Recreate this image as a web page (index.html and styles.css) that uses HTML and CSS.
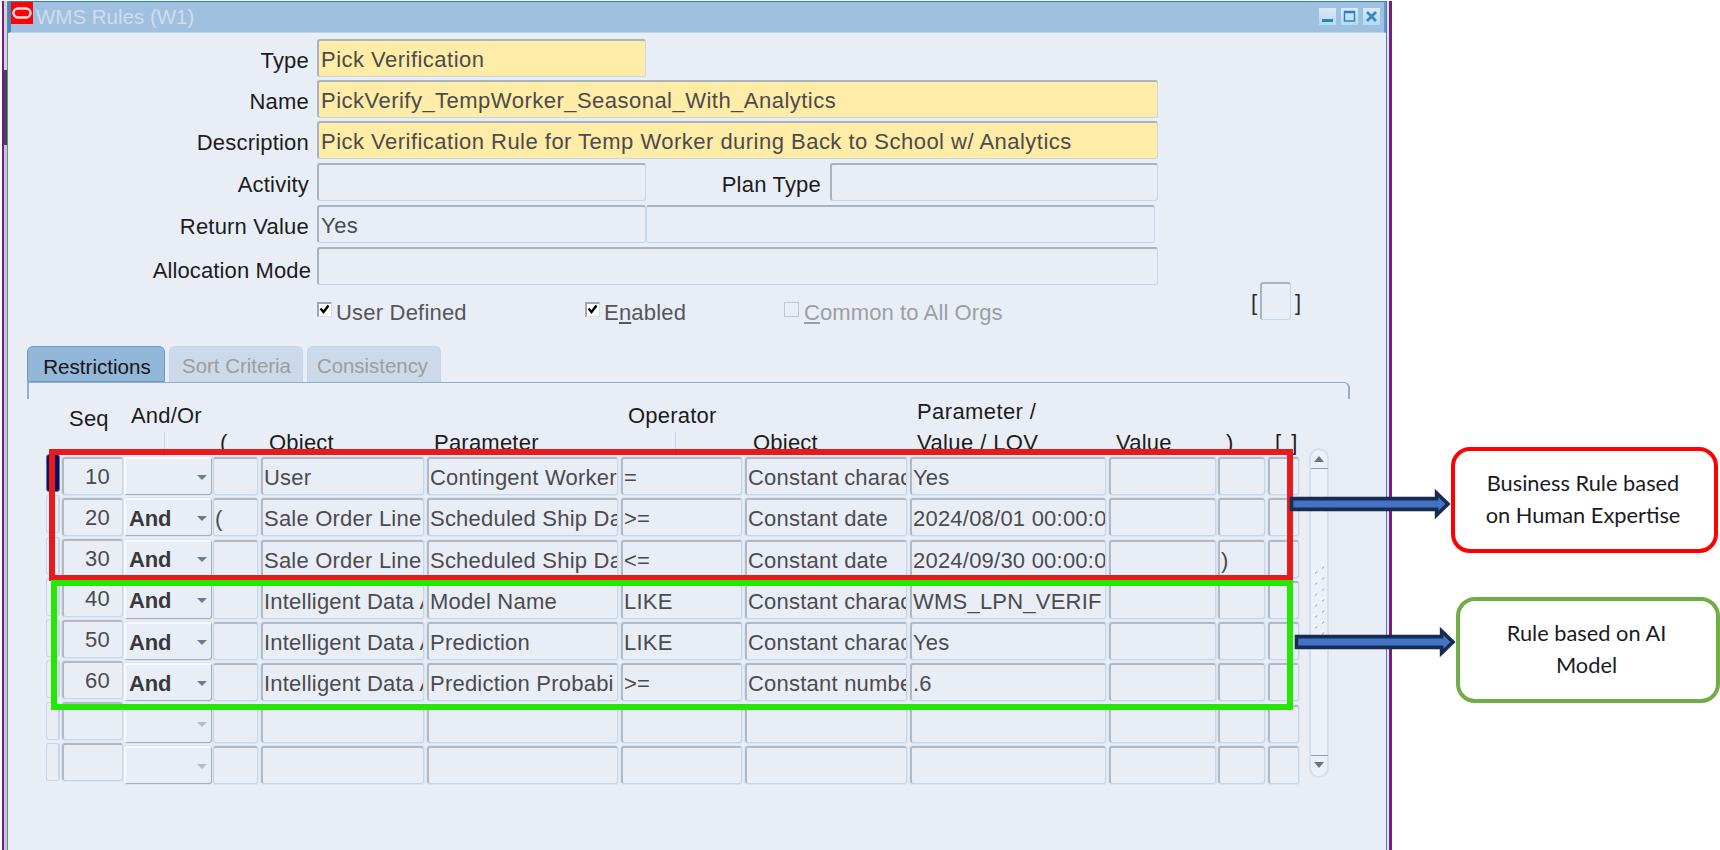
FILE: index.html
```html
<!DOCTYPE html>
<html lang="en">
<head>
  <meta charset="UTF-8" />
  <title>WMS Rules (W1)</title>
  <link rel="stylesheet" href="styles.css">
</head>
<body>

  <div class="frame">
    <div class="window">

      <div class="titlebar">
        <svg class="logo" viewBox="0 0 22 22"><rect width="22" height="22" fill="#fb0307"/><rect x="2.500" y="6.500" width="17" height="9" rx="4.500" fill="none" stroke="#ffe3e3" stroke-width="2.400"/></svg>
        <span class="title">WMS Rules (W1)</span>
        <div class="win-buttons">
          <svg viewBox="0 0 17 17"><path d="M3 12.500h11" stroke="#2f80c2" stroke-width="3"/></svg>
          <svg viewBox="0 0 17 17"><rect x="3.500" y="4" width="10" height="9" fill="none" stroke="#2f80c2" stroke-width="1.500"/><path d="M3 4h11" stroke="#2f80c2" stroke-width="2.500"/></svg>
          <svg viewBox="0 0 17 17"><path d="M4 4l9 9M13 4l-9 9" stroke="#3c86c5" stroke-width="2.800"/></svg>
        </div>
      </div>

      <!-- Rule header form -->
      <div class="form">
        <div class="form-row"><label>Type</label><div class="field req short">Pick Verification</div></div>
        <div class="form-row"><label>Name</label><div class="field req">PickVerify_TempWorker_Seasonal_With_Analytics</div></div>
        <div class="form-row gap-lg"><label>Description</label><div class="field req">Pick Verification Rule for Temp Worker during Back to School w/ Analytics</div></div>
        <div class="form-row gap-lg"><label>Activity</label><div class="field short"></div><label class="plan">Plan Type</label><div class="field short"></div></div>
        <div class="form-row gap-lg"><label>Return Value</label><div class="field short">Yes</div><div class="field second"></div></div>
        <div class="form-row"><label class="alloc">Allocation Mode</label><div class="field"></div></div>
      </div>

      <div class="options">
        <div class="check user"><span class="box"><svg viewBox="0 0 11 11"><path d="M1.500 4.500l3 3.500 5-6.500" fill="none" stroke="#000" stroke-width="2.400"/></svg></span>User Defined</div>
        <div class="check enabled"><span class="box"><svg viewBox="0 0 11 11"><path d="M1.500 4.500l3 3.500 5-6.500" fill="none" stroke="#000" stroke-width="2.400"/></svg></span><span>E<u>n</u>abled</span></div>
        <div class="check common disabled"><span class="box"></span><span><u>C</u>ommon to All Orgs</span></div>
        <div class="flex-flag"><span>[</span><div class="field"></div><span>]</span></div>
      </div>

      <div class="tabs">
        <div class="tab active">Restrictions</div>
        <div class="tab">Sort Criteria</div>
        <div class="tab last">Consistency</div>
      </div>
      <div class="panel-edge"></div>

      <!-- Restrictions table, one block per column -->
      <div class="table">
        <div class="col mark"><div class="head"></div><i class="on"></i><i></i><i></i><i></i><i></i><i></i><i></i><i></i></div>
        <div class="col seq"><div class="head">Seq</div><div>10</div><div>20</div><div>30</div><div>40</div><div>50</div><div>60</div><div></div><div></div></div>
        <div class="col andor">
          <div class="head tick">And/Or</div>
          <div></div><div>And</div><div>And</div><div>And</div><div>And</div><div>And</div><div class="off"></div><div class="off"></div>
        </div>
        <div class="col open"><div class="head">(</div><div></div><div>(</div><div></div><div></div><div></div><div></div><div></div><div></div></div>
        <div class="col object"><div class="head">Object</div><div>User</div><div>Sale Order Line</div><div>Sale Order Line</div><div>Intelligent Data A</div><div>Intelligent Data A</div><div>Intelligent Data A</div><div></div><div></div></div>
        <div class="col param"><div class="head">Parameter</div><div>Contingent Worker</div><div>Scheduled Ship Da</div><div>Scheduled Ship Da</div><div>Model Name</div><div>Prediction</div><div>Prediction Probabi</div><div></div><div></div></div>
        <div class="col oper"><div class="head tick">Operator</div><div>=</div><div>&gt;=</div><div>&lt;=</div><div>LIKE</div><div>LIKE</div><div>&gt;=</div><div></div><div></div></div>
        <div class="col object2"><div class="head">Object</div><div>Constant charac</div><div>Constant date</div><div>Constant date</div><div>Constant charac</div><div>Constant charac</div><div>Constant numbe</div><div></div><div></div></div>
        <div class="col lov"><div class="head">Parameter /<br>Value / LOV</div><div>Yes</div><div>2024/08/01 00:00:0</div><div>2024/09/30 00:00:0</div><div>WMS_LPN_VERIF</div><div>Yes</div><div>.6</div><div></div><div></div></div>
        <div class="col value"><div class="head">Value</div><div></div><div></div><div></div><div></div><div></div><div></div><div></div><div></div></div>
        <div class="col close"><div class="head">)</div><div></div><div></div><div>)</div><div></div><div></div><div></div><div></div><div></div></div>
        <div class="col flag"><div class="head">[ ]</div><div></div><div></div><div></div><div></div><div></div><div></div><div></div><div></div></div>
        <div class="scrollbar">
          <span class="up"></span>
          <svg class="grip" viewBox="0 0 14 70">
            <defs><pattern id="dots" width="14" height="11" patternUnits="userSpaceOnUse">
              <path d="M2 7.500l2-2M9 2.500l2-2" stroke="#fff" stroke-width="2"/>
              <path d="M3 8.500l2-2M10 3.500l2-2" stroke="#a5bbd2" stroke-width="1.300"/>
            </pattern></defs>
            <rect width="14" height="70" fill="url(#dots)"/>
          </svg>
          <span class="down"></span>
        </div>
      </div>
    </div>
  </div>

  <!-- Annotations over the form -->
  <div class="mark-box human"></div>
  <div class="mark-box ai"></div>
  <svg class="arrow arrow-human" viewBox="0 0 162 32"><path d="M2.500 10.600H147.600V5L159 16 147.600 27V21.400H2.500z" fill="#4472c4" stroke="#172c51" stroke-width="3.600"/></svg>
  <svg class="arrow arrow-ai" viewBox="0 0 162 32"><path d="M2.500 10.600H147.600V5L159 16 147.600 27V21.400H2.500z" fill="#4472c4" stroke="#172c51" stroke-width="3.600"/></svg>

  <div class="callouts">
    <div class="callout callout-human">Business Rule based<br>on Human Expertise</div>
    <div class="callout callout-ai">Rule based on AI<br>Model</div>
  </div>

</body>
</html>
```
FILE: styles.css
```css
:root {
  --bg: #e9eef6;
  --line: #c6d6ea;
  --shade: #a9b2bf;
  --text: #4b4b4f;
  --purple: #781e82;
}

* {
  box-sizing: border-box;
  margin: 0;
  padding: 0;
}

body {
  display: flex;
  position: relative;
  width: 1720px;
  height: 850px;
  overflow: hidden;
  background: #fff;
  font-family: "Liberation Sans", Arial, sans-serif;
  font-size: 22px;
  line-height: 25px;
  color: #1c1c20;
}

.frame {
  width: 1390px;
  height: 849px;
  margin: 1px 0 0 2px;
  padding: 0 2px 0 3px;
  border-left: 2px solid var(--purple);
  border-right: 3px solid var(--purple);
  background: #dfe5ee linear-gradient(#d0d3d8 69px, #45464a 69px, #45464a 144px, #c3c7ce 144px) 0 0 / 3px 100% no-repeat;
}

.window {
  height: 849px;
  border-left: 1px solid #6d86a6;
  border-right: 1px solid #4f7ba8;
  background: var(--bg);
}

/* Title bar */
.titlebar {
  display: flex;
  height: 32px;
  border-top: 1px solid #2b80bf;
  border-left: 3px solid #3c8ac6;
  border-right: 2px solid #5d9bd0;
  border-bottom: 1px solid #bdd4e9;
  background: #9fc1df;
}

.logo {
  width: 22px;
  height: 22px;
}

.title {
  margin: 1px 0 0 3px;
  font-size: 20.5px;
  line-height: 27px;
  color: #cfdded;
}

.win-buttons {
  display: flex;
  gap: 5px;
  margin: 6px 4px 0 auto;
}

.win-buttons svg {
  width: 17px;
  height: 17px;
  background: linear-gradient(#d8eaf7, #b5daf0);
}

/* Form */
.form {
  display: flex;
  flex-direction: column;
  gap: 3px;
  padding-top: 6px;
}

.form-row {
  display: flex;
  height: 38px;
}

.gap-lg {
  margin-bottom: 1px;
}

.form-row label {
  width: 309px;
  padding: 9px 8px 0 0;
  letter-spacing: 0.2px;
  text-align: right;
  white-space: nowrap;
}

.form-row label.plan {
  width: 184px;
  padding-right: 9px;
}

.form-row label.alloc {
  padding: 11px 6px 0 0;
  letter-spacing: 0.12px;
}

.field {
  width: 841px;
  height: 38px;
  padding: 0 2px;
  border: 1px solid var(--line);
  border-top: 2px solid var(--shade);
  border-left: 2px solid var(--shade);
  border-radius: 3px;
  line-height: 37px;
  letter-spacing: 0.48px;
  white-space: nowrap;
  overflow: hidden;
  color: var(--text);
}

.short {
  width: 329px;
}

.plan + .short {
  width: 328px;
}

.second {
  width: 509px;
  border-left: 1px solid var(--line);
}

.req {
  background: #ffeca6;
}

/* Checkboxes */
.options {
  display: flex;
  height: 61px;
  color: #55565b;
}

.check {
  display: flex;
  padding-top: 14px;
  line-height: 28px;
  letter-spacing: 0.2px;
}

.user {
  width: 268px;
  margin-left: 309px;
}

.user .box,
.enabled .box {
  margin-right: 4px;
}

.enabled {
  width: 199px;
}

.common {
  width: 467px;
  letter-spacing: 0.1px;
}

.box {
  width: 15px;
  height: 15px;
  margin: 3px 5px 0 0;
  border: 1px solid #d9dde3;
  border-top: 2px solid #a2a6ad;
  border-left: 2px solid #a2a6ad;
  background: #fff;
}

.box svg {
  display: block;
  width: 11px;
  height: 11px;
}

.disabled {
  color: #9c9ea3;
}

.disabled .box {
  border: 1px solid #c3c5c8;
  background: transparent;
}

.flex-flag {
  display: flex;
  color: #2c2c30;
}

.flex-flag span {
  width: 9px;
  line-height: 36px;
}

.flex-flag .field {
  width: 31px;
  margin: -3px 4px 0 0;
}

/* Tabs */
.tabs {
  display: flex;
  gap: 4px;
  height: 36px;
  padding-left: 19px;
}

.tab {
  width: 134px;
  padding-left: 1px;
  border: 1px solid #c3d5e8;
  border-bottom: none;
  border-radius: 6px 6px 0 0;
  background: #cbd9ea;
  font-size: 20.4px;
  line-height: 39px;
  text-align: center;
  color: #9b9da2;
}

.tab.active {
  width: 138px;
  padding-left: 2px;
  border: 1px solid #6d9ac4;
  background: #93b7d8;
  font-size: 20.6px;
  color: #15151a;
}

.tab.last {
  padding-right: 4px;
}

.panel-edge {
  width: 1323px;
  height: 17px;
  margin-left: 19px;
  border: 2px solid #93aec8;
  border-bottom: none;
  border-radius: 0 6px 0 0;
  border-top-width: 1px;
}

/* Table */
.table {
  display: flex;
  margin-top: -16px;
  padding-left: 38px;
}

.col {
  display: flex;
  flex-direction: column;
  gap: 3.3px;
  letter-spacing: 0.22px;
}

.col > div {
  height: 38px;
  padding-left: 1px;
  border: 1px solid var(--line);
  border-top: 2px solid #b2b9c4;
  border-left: 2px solid #b2b9c4;
  border-radius: 3px;
  box-shadow: 0 0 0 1px #dae5f2;
  line-height: 37px;
  white-space: nowrap;
  overflow: hidden;
  color: var(--text);
}

.col > .head {
  height: 74px;
  margin-bottom: -3.3px;
  padding: 47px 0 0;
  border: none;
  box-shadow: none;
  line-height: 25px;
  overflow: visible;
  color: #1c1c20;
}

.mark {
  width: 14px;
  margin-right: 2px;
}

.mark > .head {
  height: 71px;
}

.mark i {
  height: 38px;
  border: 1px solid var(--line);
  border-right-width: 2px;
  border-radius: 3px;
}

.mark .on {
  border: 1px solid #4a7fb5;
  background: #120a5a;
}

.seq {
  width: 61px;
  margin-right: 1px;
  gap: 2.8px;
}

.seq > div {
  padding-right: 12px;
  line-height: 36px;
  text-align: right;
}

.seq > .head {
  margin-bottom: -2.8px;
  padding: 23px 0 0 7px;
  text-align: left;
}

.andor {
  width: 88px;
  margin-right: 1px;
}

.andor > div {
  display: flex;
  align-items: center;
  padding: 1px 4px 0 3px;
  border: 2px solid #f8fafd;
  border-right: 1px solid #a9adb4;
  border-bottom: 1px solid #a9adb4;
  font-weight: bold;
  color: #39393d;
  letter-spacing: -0.2px;
}

.andor > div:not(.head)::after {
  content: "";
  margin-left: auto;
  border: 5px solid transparent;
  border-top: 5px solid #6c7a92;
  border-bottom: none;
}

.andor > div.off:not(.head)::after {
  border-top-color: #b9bbbe;
}

.andor > .head {
  display: block;
  font-weight: normal;
  letter-spacing: 0.2px;
}

.tick {
  background: linear-gradient(#c6d6ea, #c6d6ea) 40px 49px / 1px 25px no-repeat;
}

.andor > .tick {
  padding: 20px 0 0 7px;
}

.oper > .tick {
  padding: 20px 0 0 7px;
  background-position: 54px 49px;
}

.open {
  width: 45px;
  margin-right: 3px;
}

.open > div {
  border-left: 1px solid var(--line);
}

.open > .head {
  padding-left: 7px;
}

.object {
  width: 163px;
  margin-right: 3px;
}

.object > .head {
  padding-left: 8px;
}

.param {
  width: 191px;
  margin-right: 3px;
}

.param > .head {
  padding-left: 7px;
}

.oper {
  width: 121px;
  margin-right: 3px;
}

.object2 {
  width: 162px;
  margin-right: 3px;
}

.object2 > .head {
  padding-left: 8px;
}

.lov {
  width: 196px;
  margin-right: 3px;
}

.lov > .head {
  padding: 13px 0 0 7px;
  line-height: 31px;
  letter-spacing: 0.4px;
}

.value {
  width: 107px;
  margin-right: 2px;
}

.value > .head {
  padding-left: 7px;
}

.close {
  width: 47px;
  margin-right: 3px;
}

.close > .head {
  padding-left: 8px;
}

.flag {
  width: 31px;
  margin-right: 10px;
}

.flag > .head {
  padding-left: 7px;
  letter-spacing: 2px;
}

.scrollbar {
  display: flex;
  flex-direction: column;
  align-items: center;
  justify-content: space-between;
  width: 20px;
  height: 330px;
  margin-top: 65px;
  border: 2px solid #d3dfee;
  border-radius: 10px;
  background: #ecf1f8;
}

.up,
.down {
  display: flex;
  justify-content: center;
  align-items: flex-start;
  width: 17px;
  height: 19px;
  padding-top: 6px;
  border-bottom: 1px solid #93a0b2;
}

.down {
  height: 21px;
  border-top: 1px solid #93a0b2;
  border-bottom: none;
}

.up::after,
.down::after {
  content: "";
  border: 5px solid transparent;
  border-top: none;
  border-bottom: 6px solid #66748c;
}

.down::after {
  border-top: 6px solid #66748c;
  border-bottom: none;
}

.grip {
  width: 14px;
  height: 70px;
  margin-bottom: 24px;
}

/* Annotations */
.mark-box {
  position: absolute;
  left: 49px;
  top: 449px;
  width: 1244px;
  height: 132px;
  border: 6px solid #e81a1c;
}

.mark-box.ai {
  left: 51px;
  top: 580px;
  width: 1242px;
  height: 130px;
  border-color: #24e803;
}

.arrow {
  position: absolute;
  width: 162px;
  height: 32px;
}

.arrow-human {
  left: 1289px;
  top: 488px;
}

.arrow-ai {
  left: 1294px;
  top: 626px;
}

.callouts {
  display: flex;
  flex-direction: column;
  gap: 44px;
  width: 328px;
  padding-top: 447px;
}

.callout {
  width: 267px;
  height: 106px;
  margin-left: 59px;
  padding: 16px 3px 0 0;
  border: 4px solid #fe0000;
  border-radius: 19px;
  background: #fff;
  font-family: Lato, sans-serif;
  font-size: 21.8px;
  line-height: 31.5px;
  text-align: center;
  color: #1b1b1f;
}

.callout-ai {
  width: 264px;
  margin-left: 64px;
  padding-top: 16px;
  border-color: #70ad47;
}
```
